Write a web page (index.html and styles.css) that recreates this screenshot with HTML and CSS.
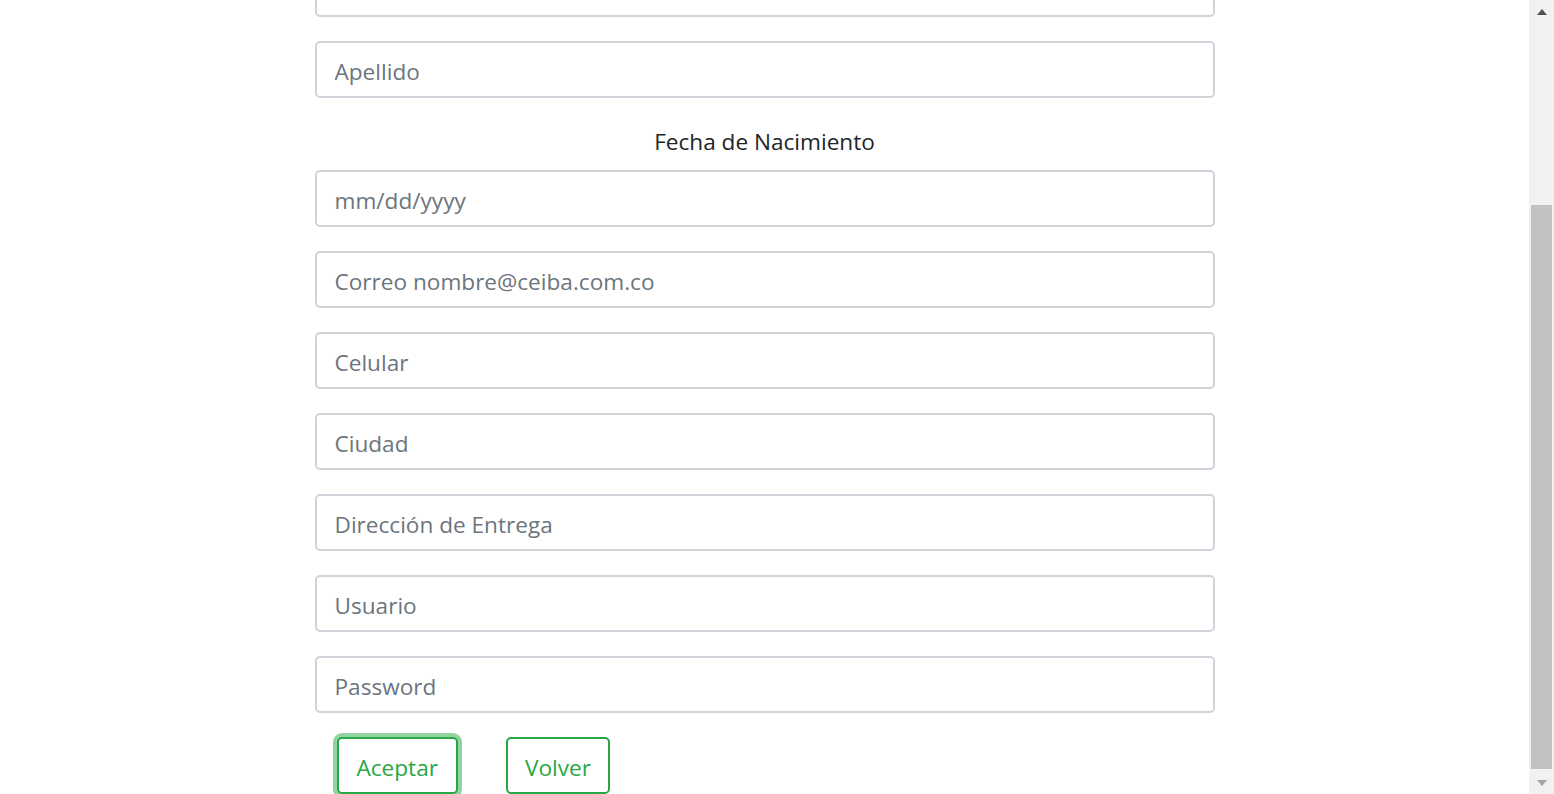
FILE: index.html
```html
<!DOCTYPE html>
<html lang="es">
<head>
<meta charset="utf-8">
<title>Registro</title>
<link rel="stylesheet" href="styles.css">
</head>
<body>
<div class="screen">
  <main class="viewport">
    <form class="form">
      <input class="field" type="text" placeholder="Nombre">
      <input class="field" type="text" placeholder="Apellido">
      <label class="date-label">Fecha de Nacimiento</label>
      <input class="field" type="text" placeholder="mm/dd/yyyy">
      <input class="field" type="text" placeholder="Correo nombre@ceiba.com.co">
      <input class="field" type="text" placeholder="Celular">
      <input class="field" type="text" placeholder="Ciudad">
      <input class="field" type="text" placeholder="Dirección de Entrega">
      <input class="field" type="text" placeholder="Usuario">
      <input class="field" type="text" placeholder="Password">
      <div class="actions">
        <button type="button" class="btn btn-focus">Aceptar</button>
        <button type="button" class="btn">Volver</button>
      </div>
    </form>
  </main>
  <div class="scrollbar">
    <div class="arrow arrow-up"></div>
    <div class="track">
      <div class="thumb"></div>
    </div>
    <div class="arrow arrow-down"></div>
  </div>
</div>
</body>
</html>
```
FILE: styles.css
```css
html, body {
  margin: 0;
  padding: 0;
  height: 100%;
  overflow: hidden;
  background: #fff;
}
body {
  font-family: "Open Sans", "Noto Sans", "Liberation Sans", sans-serif;
  color: #212529;
}
.screen {
  display: flex;
  height: 794px;
}
.viewport {
  flex: 1;
  overflow: hidden;
}
.form {
  width: 900px;
  margin: -40px auto 0;
  display: flex;
  flex-direction: column;
}
.field {
  box-sizing: border-box;
  height: 57px;
  margin: 0 0 24px;
  padding: 4px 18px 0;
  border: 2px solid #ced4da;
  border-radius: 5px;
  font-family: inherit;
  font-size: 22.6px;
  color: #495057;
  background: #fff;
  outline: none;
}
.field::placeholder {
  color: #6c757d;
  opacity: 1;
}
.date-label {
  display: block;
  text-align: center;
  font-size: 22.6px;
  line-height: 30px;
  margin: 5px 0 13px;
  color: #212529;
}
.actions {
  display: flex;
  gap: 48px;
  padding-left: 22px;
}
.btn {
  box-sizing: border-box;
  height: 57px;
  padding: 4px 17px 0;
  border: 2px solid #28a745;
  border-radius: 5px;
  background: #fff;
  color: #28a745;
  font-family: inherit;
  font-size: 22.6px;
  cursor: pointer;
}
.btn-focus {
  padding: 4px 18px 0;
  box-shadow: 0 0 0 4px rgba(40, 167, 69, 0.5);
}
.scrollbar {
  width: 25px;
  background: #f1f1f1;
  display: flex;
  flex-direction: column;
  align-items: center;
}
.arrow {
  height: 23px;
  width: 100%;
  display: flex;
  align-items: center;
  justify-content: center;
  flex: none;
}
.arrow-up::before {
  content: "";
  border-left: 5.5px solid transparent;
  border-right: 5.5px solid transparent;
  border-bottom: 6px solid #505050;
}
.arrow-down::before {
  content: "";
  border-left: 5.5px solid transparent;
  border-right: 5.5px solid transparent;
  border-top: 6px solid #a3a3a3;
}
.track {
  flex: 1;
  width: 100%;
  display: flex;
  flex-direction: column;
  justify-content: flex-end;
  align-items: center;
}
.thumb {
  width: 21px;
  height: 564px;
  margin-bottom: 2px;
  background: #c1c1c1;
}
```
